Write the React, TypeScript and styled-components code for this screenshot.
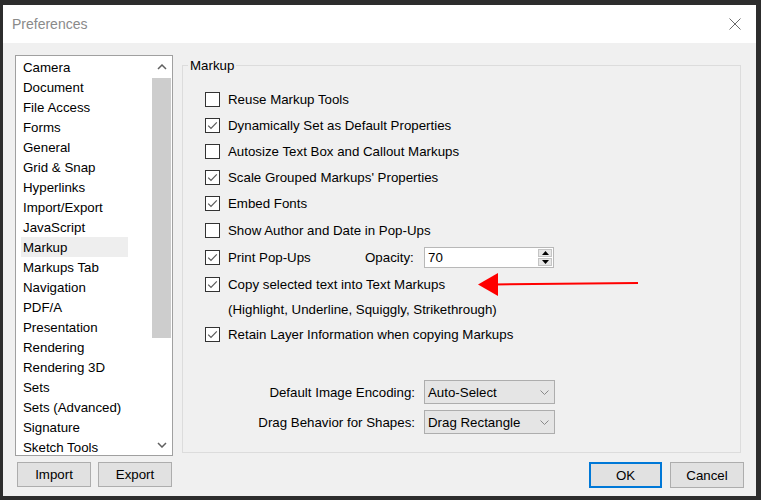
import React from 'react';
import styled, { createGlobalStyle } from 'styled-components';

const Global = createGlobalStyle`
  html, body { margin: 0; padding: 0; background: #2d2d2d; }
  body { font-family: "Liberation Sans", Arial, sans-serif; font-size: 13.3px; color: #000; }
  * { box-sizing: border-box; }
`;

const Window = styled.div`
  position: relative;
  width: 761px;
  height: 500px;
  background: #2d2d2d;
  padding: 5px 5px 4px 3px;
  display: flex;
  flex-direction: column;
`;

const TitleBar = styled.div`
  height: 38px;
  background: #ffffff;
  display: flex;
  align-items: center;
  justify-content: space-between;
  padding: 0 15px 0 9px;
`;

const Title = styled.span`
  font-size: 14px;
  color: #8a8a8a;
`;

const Body = styled.div`
  flex: 1;
  background: #f0f0f0;
  display: flex;
  gap: 9px;
  padding: 12px 12px 0 12px;
`;

const LeftCol = styled.div`
  width: 158px;
  display: flex;
  flex-direction: column;
`;

const ListBox = styled.div`
  height: 401px;
  border: 1px solid #a0a0a0;
  background: #ffffff;
  display: flex;
  overflow: hidden;
`;

const Items = styled.div`
  flex: 1;
  padding-top: 1px;
  overflow: hidden;
`;

const Item = styled.div<{ $selected?: boolean }>`
  height: 20px;
  line-height: 22px;
  overflow: hidden;
  width: 107px;
  margin-left: 5px;
  padding-left: 2px;
  white-space: nowrap;
  background: ${(p) => (p.$selected ? '#eeeeee' : 'transparent')};
`;

const ScrollBar = styled.div`
  width: 21px;
  display: flex;
  flex-direction: column;
  background: #ffffff;
`;

const ScrollBtn = styled.div`
  height: 21px;
  display: flex;
  align-items: center;
  justify-content: center;
`;

const Track = styled.div`
  flex: 1;
  padding: 1px 1px 0 1px;
`;

const Thumb = styled.div`
  height: 260px;
  background: #cdcdcd;
`;

const ButtonRow = styled.div<{ $end?: boolean }>`
  display: flex;
  gap: ${(p) => (p.$end ? '8px' : '7px')};
  justify-content: ${(p) => (p.$end ? 'flex-end' : 'flex-start')};
  padding-left: ${(p) => (p.$end ? '0' : '2px')};
`;

const Button = styled.button<{ $primary?: boolean; $w: number; $h: number }>`
  width: ${(p) => p.$w}px;
  height: ${(p) => p.$h}px;
  background: #e1e1e1;
  border: ${(p) => (p.$primary ? '2px solid #0078d7' : '1px solid #adadad')};
  font-family: "Liberation Sans", Arial, sans-serif;
  font-size: 13.3px;
  color: #000;
  padding: 0;
`;

const RightCol = styled.div`
  width: 562px;
  display: flex;
  flex-direction: column;
`;

const Group = styled.fieldset`
  width: 559px;
  height: 395px;
  margin: 3px 0 0 0;
  padding: 0;
  border: 1px solid #dcdcdc;
  min-width: 0;
`;

const Legend = styled.legend`
  margin-left: 5px;
  padding: 0 2px;
  font-size: 13.3px;
  line-height: 15px;
`;

const GroupContent = styled.div`
  padding: 13px 0 0 22px;
  display: flex;
  flex-direction: column;
`;

const Row = styled.div<{ $mt?: number; $h?: number }>`
  height: ${(p) => p.$h ?? 26}px;
  margin-top: ${(p) => p.$mt ?? 0}px;
  display: flex;
  align-items: center;
  white-space: nowrap;
`;

const CheckWrap = styled.label<{ $w?: number }>`
  display: flex;
  align-items: center;
  width: ${(p) => (p.$w ? `${p.$w}px` : 'auto')};
`;

const Box = styled.span`
  width: 15px;
  height: 15px;
  border: 1px solid #333333;
  background: #ffffff;
  display: flex;
  align-items: center;
  justify-content: center;
  flex: none;
`;

const CheckText = styled.span`
  margin-left: 8px;
`;

const Note = styled.span`
  padding-left: 23px;
`;

const OpacityLabel = styled.span`
  width: 59px;
`;

const SpinBox = styled.div`
  width: 130px;
  height: 21px;
  border: 1px solid #b8b8b8;
  background: #ffffff;
  display: flex;
  align-items: center;
  padding: 1px 1px 1px 3px;
`;

const SpinValue = styled.span`
  flex: 1;
`;

const SpinBtns = styled.div`
  width: 14px;
  height: 100%;
  display: flex;
  flex-direction: column;
  gap: 1px;
`;

const SpinBtn = styled.div`
  flex: 1;
  background: #e6e6e6;
  border: 1px solid #c4c4c4;
  display: flex;
  align-items: center;
  justify-content: center;
`;

const SelectGrid = styled.div`
  margin-top: 33px;
  display: grid;
  grid-template-columns: 210px 131px;
  grid-auto-rows: 24px;
  column-gap: 9px;
  row-gap: 6px;
  align-items: center;
`;

const SelectLabel = styled.span`
  text-align: right;
  white-space: nowrap;
`;

const Select = styled.div`
  height: 24px;
  background: #e5e5e5;
  border: 1px solid #adadad;
  display: flex;
  align-items: center;
  justify-content: space-between;
  padding: 0 5px 0 3px;
`;

const ArrowLayer = styled.svg`
  position: absolute;
  left: 470px;
  top: 268px;
  pointer-events: none;
`;

const Check = ({ on }: { on?: boolean }) => (
  <Box>
    {on && (
      <svg width="13" height="13" viewBox="0 0 13 13">
        <polyline points="2.2,6.6 5,9.4 10.8,3.4" fill="none" stroke="#5a5a5a" strokeWidth="1.2" />
      </svg>
    )}
  </Box>
);

const CheckItem = ({ on, text, w }: { on?: boolean; text: string; w?: number }) => (
  <CheckWrap $w={w}>
    <Check on={on} />
    <CheckText>{text}</CheckText>
  </CheckWrap>
);

const Chevron = ({ up, color = '#606060' }: { up?: boolean; color?: string }) => (
  <svg width="10" height="6" viewBox="0 0 10 6">
    <polyline
      points={up ? '1,5 5,1 9,5' : '1,1 5,5 9,1'}
      fill="none"
      stroke={color}
      strokeWidth="1.5"
    />
  </svg>
);

const SmallChevron = () => (
  <svg width="9" height="5" viewBox="0 0 9 5">
    <polyline points="0.5,0.5 4.5,4.5 8.5,0.5" fill="none" stroke="#8a8a8a" strokeWidth="1" />
  </svg>
);

const Tri = ({ up }: { up?: boolean }) => (
  <svg width="7" height="4" viewBox="0 0 7 4">
    <polygon points={up ? '0,4 3.5,0 7,4' : '0,0 3.5,4 7,0'} fill="#000" />
  </svg>
);

const categories = [
  'Camera', 'Document', 'File Access', 'Forms', 'General', 'Grid & Snap', 'Hyperlinks',
  'Import/Export', 'JavaScript', 'Markup', 'Markups Tab', 'Navigation', 'PDF/A',
  'Presentation', 'Rendering', 'Rendering 3D', 'Sets', 'Sets (Advanced)', 'Signature',
  'Sketch Tools',
];

export default function App() {
  return (
    <>
      <Global />
      <Window>
        <TitleBar>
          <Title>Preferences</Title>
          <svg width="12" height="12" viewBox="0 0 12 12">
            <path d="M0.5 0.5 L11.5 11.5 M11.5 0.5 L0.5 11.5" stroke="#6a6a6a" strokeWidth="1" />
          </svg>
        </TitleBar>
        <Body>
          <LeftCol>
            <ListBox>
              <Items>
                {categories.map((c) => (
                  <Item key={c} $selected={c === 'Markup'}>{c}</Item>
                ))}
              </Items>
              <ScrollBar>
                <ScrollBtn><Chevron up /></ScrollBtn>
                <Track><Thumb /></Track>
                <ScrollBtn><Chevron /></ScrollBtn>
              </ScrollBar>
            </ListBox>
            <div style={{ marginTop: 6 }}>
              <ButtonRow>
                <Button $w={74} $h={25}>Import</Button>
                <Button $w={74} $h={25}>Export</Button>
              </ButtonRow>
            </div>
          </LeftCol>
          <RightCol>
            <Group>
              <Legend>Markup</Legend>
              <GroupContent>
                <Row><CheckItem text="Reuse Markup Tools" /></Row>
                <Row><CheckItem on text="Dynamically Set as Default Properties" /></Row>
                <Row><CheckItem text="Autosize Text Box and Callout Markups" /></Row>
                <Row><CheckItem on text="Scale Grouped Markups' Properties" /></Row>
                <Row><CheckItem on text="Embed Fonts" /></Row>
                <Row $mt={1}><CheckItem text="Show Author and Date in Pop-Ups" /></Row>
                <Row $mt={1}>
                  <CheckItem on text="Print Pop-Ups" w={160} />
                  <OpacityLabel>Opacity:</OpacityLabel>
                  <SpinBox>
                    <SpinValue>70</SpinValue>
                    <SpinBtns>
                      <SpinBtn><Tri up /></SpinBtn>
                      <SpinBtn><Tri /></SpinBtn>
                    </SpinBtns>
                  </SpinBox>
                </Row>
                <Row $mt={1}><CheckItem on text="Copy selected text into Text Markups" /></Row>
                <Row $h={24}><Note>(Highlight, Underline, Squiggly, Strikethrough)</Note></Row>
                <Row><CheckItem on text="Retain Layer Information when copying Markups" /></Row>
                <SelectGrid>
                  <SelectLabel>Default Image Encoding:</SelectLabel>
                  <Select><span>Auto-Select</span><SmallChevron /></Select>
                  <SelectLabel>Drag Behavior for Shapes:</SelectLabel>
                  <Select><span>Drag Rectangle</span><SmallChevron /></Select>
                </SelectGrid>
              </GroupContent>
            </Group>
            <div style={{ marginTop: 9 }}>
              <ButtonRow $end>
                <Button $primary $w={73} $h={26}>OK</Button>
                <Button $w={74} $h={26}>Cancel</Button>
              </ButtonRow>
            </div>
          </RightCol>
        </Body>
        <ArrowLayer width="175" height="35" viewBox="0 0 175 35">
          <line x1="168" y1="15" x2="24" y2="16.5" stroke="#ff0000" strokeWidth="2" />
          <polygon points="8,16.5 28,5 28,28" fill="#ff0000" />
        </ArrowLayer>
      </Window>
    </>
  );
}
